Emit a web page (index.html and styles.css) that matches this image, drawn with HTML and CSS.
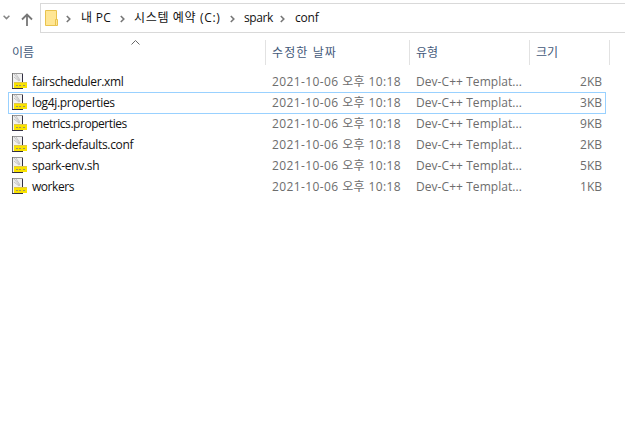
FILE: index.html
```html
<!DOCTYPE html>
<html lang="ko">
<head>
<meta charset="utf-8">
<title>conf</title>
<link rel="stylesheet" href="styles.css">
</head>
<body>
<svg class="defs" width="0" height="0">
  <symbol id="file" viewBox="0 0 16 16">
    <path fill="#f1f1f1" d="M0 0h11v15H0z"/>
    <path fill="none" stroke="#c2c2c2" d="M2 1l6 7M4 1l4 6M2 4l5 4"/>
    <path fill="#999" d="M0 0h11v1H0z"/>
    <path fill="#6e6e6e" d="M0 0h1v15H0z"/>
    <path fill="#333044" d="M10 1h1v8h-1zM0 15h11v1H0z"/>
    <path fill="#f9e300" d="M2 9h13v6H2z"/>
    <path fill="#dfc64a" d="M2 9h13v1H2z"/>
    <path fill="#9a9168" d="M4 12h2v1H4zM7 12h2v1H7zM11 12h2v1h-2z"/>
  </symbol>
  <symbol id="chevron" viewBox="0 0 5 8">
    <path fill="none" stroke="#777" stroke-width="1.6" d="M.8 1L3.8 4 .8 7"/>
  </symbol>
</svg>
<nav class="toolbar">
  <svg class="recent" viewBox="0 0 7 5"><path fill="none" stroke="#858585" stroke-width="1.5" d="M.6.8l2.9 2.8L6.4.8"/></svg>
  <svg class="up" viewBox="0 0 12 13"><path fill="none" stroke="#777" stroke-width="1.8" d="M6 13V1.5M1 6.5l5-5 5 5"/></svg>
  <div class="address">
    <svg class="folder" viewBox="0 0 13 16"><path fill="#ffe694" stroke="#e9c34d" d="M.5.5h11v15H.5z"/><path fill="#ffe694" stroke="#e9c34d" d="M10.5 9.5h2v6h-2z"/></svg>
    <svg class="chev"><use href="#chevron"/></svg>
    <span class="crumb pc">내 PC</span>
    <svg class="chev"><use href="#chevron"/></svg>
    <span class="crumb drive">시스템 예약 (C:)</span>
    <svg class="chev"><use href="#chevron"/></svg>
    <span class="crumb spark">spark</span>
    <svg class="chev"><use href="#chevron"/></svg>
    <span class="crumb conf">conf</span>
  </div>
</nav>
<main class="list">
  <div class="head">
    <span>이름<svg class="sort" viewBox="0 0 9 5"><path fill="none" stroke="#666" d="M.5 4.5l4-4 4 4"/></svg></span>
    <span class="modified">수정한 날짜</span><span>유형</span><span>크기</span>
  </div>
  <div class="row"><span class="name"><svg><use href="#file"/></svg><b class="n1">fairscheduler.xml</b></span><span class="date">2021-10-06 오후 10:18</span><span class="type">Dev-C++ Templat...</span><span class="size">2KB</span></div>
  <div class="row selected"><span class="name"><svg><use href="#file"/></svg><b class="n2">log4j.properties</b></span><span class="date">2021-10-06 오후 10:18</span><span class="type">Dev-C++ Templat...</span><span class="size">3KB</span></div>
  <div class="row"><span class="name"><svg><use href="#file"/></svg><b class="n3">metrics.properties</b></span><span class="date">2021-10-06 오후 10:18</span><span class="type">Dev-C++ Templat...</span><span class="size">9KB</span></div>
  <div class="row"><span class="name"><svg><use href="#file"/></svg><b class="n4">spark-defaults.conf</b></span><span class="date">2021-10-06 오후 10:18</span><span class="type">Dev-C++ Templat...</span><span class="size">2KB</span></div>
  <div class="row"><span class="name"><svg><use href="#file"/></svg><b class="n5">spark-env.sh</b></span><span class="date">2021-10-06 오후 10:18</span><span class="type">Dev-C++ Templat...</span><span class="size">5KB</span></div>
  <div class="row"><span class="name"><svg><use href="#file"/></svg><b class="n6">workers</b></span><span class="date">2021-10-06 오후 10:18</span><span class="type">Dev-C++ Templat...</span><span class="size">1KB</span></div>
</main>
</body>
</html>
```
FILE: styles.css
```css
* { box-sizing: border-box; }
body {
  margin: 0;
  height: 430px;
  overflow: hidden;
  background: #fff;
  color: #111;
  font: 12px/20px "Open Sans", "Noto Sans CJK KR", sans-serif;
  white-space: nowrap;
}
svg { display: block; flex: none; }
.defs { position: absolute; }
.toolbar { display: flex; align-items: center; height: 36px; padding-left: 3px; }
.recent { width: 7px; height: 5px; margin: -2px 11px 0 0; }
.up { width: 12px; height: 13px; margin: 2px 7px 0 0; }
.address {
  display: flex;
  align-items: center;
  flex: 1;
  height: 30px;
  padding-left: 4px;
  border: 1px solid #d9d9d9;
  border-right: 0;
}
.folder { width: 13px; height: 16px; margin-right: 8px; }
.chev { width: 5px; height: 8px; margin-top: 1px; }
.crumb { flex: none; margin: 0 9px 0 10px; line-height: 18px; }
.pc { width: 30px; letter-spacing: .3px; }
.drive { width: 87px; margin-left: 9px; letter-spacing: .65px; }
.spark { width: 28px; margin: 0 8px 0 9px; letter-spacing: -.4px; }
.conf { margin-left: 10px; letter-spacing: -.2px; }
.head, .row { display: grid; grid-template-columns: 257px 144px 120px 76px; margin-left: 8px; }
.head {
  grid-template-columns: 258px 144px 120px 80px;
  height: 25px;
  margin-top: 4px;
  line-height: 25px;
  color: #43597a;
}
.head span { position: relative; padding-left: 6px; border-right: 1px solid #e2e2e2; }
.head span:first-child { padding-left: 4px; }
.head .modified { letter-spacing: 1.1px; }
.sort { position: absolute; left: 123px; top: 0; width: 9px; height: 5px; }
.list { display: block; }
.head + .row { margin-top: 6px; }
.row { width: 598px; height: 21px; line-height: 21px; color: #6d6d6d; }
.row.selected { height: 22px; margin-bottom: -1px; box-shadow: inset 0 0 0 1px #99d1ff; }
.name { display: flex; gap: 4px; padding: 2px 0 0 4px; color: #111; }
.name svg { width: 16px; height: 16px; }
.name b { font-weight: 400; line-height: 17px; letter-spacing: -.33px; }
.name .n3, .name .n6 { letter-spacing: -.45px; }
.date, .type { padding-left: 7px; }
.date { letter-spacing: .4px; }
.type { letter-spacing: .06px; }
.size { text-align: right; padding-right: 3px; }
```
